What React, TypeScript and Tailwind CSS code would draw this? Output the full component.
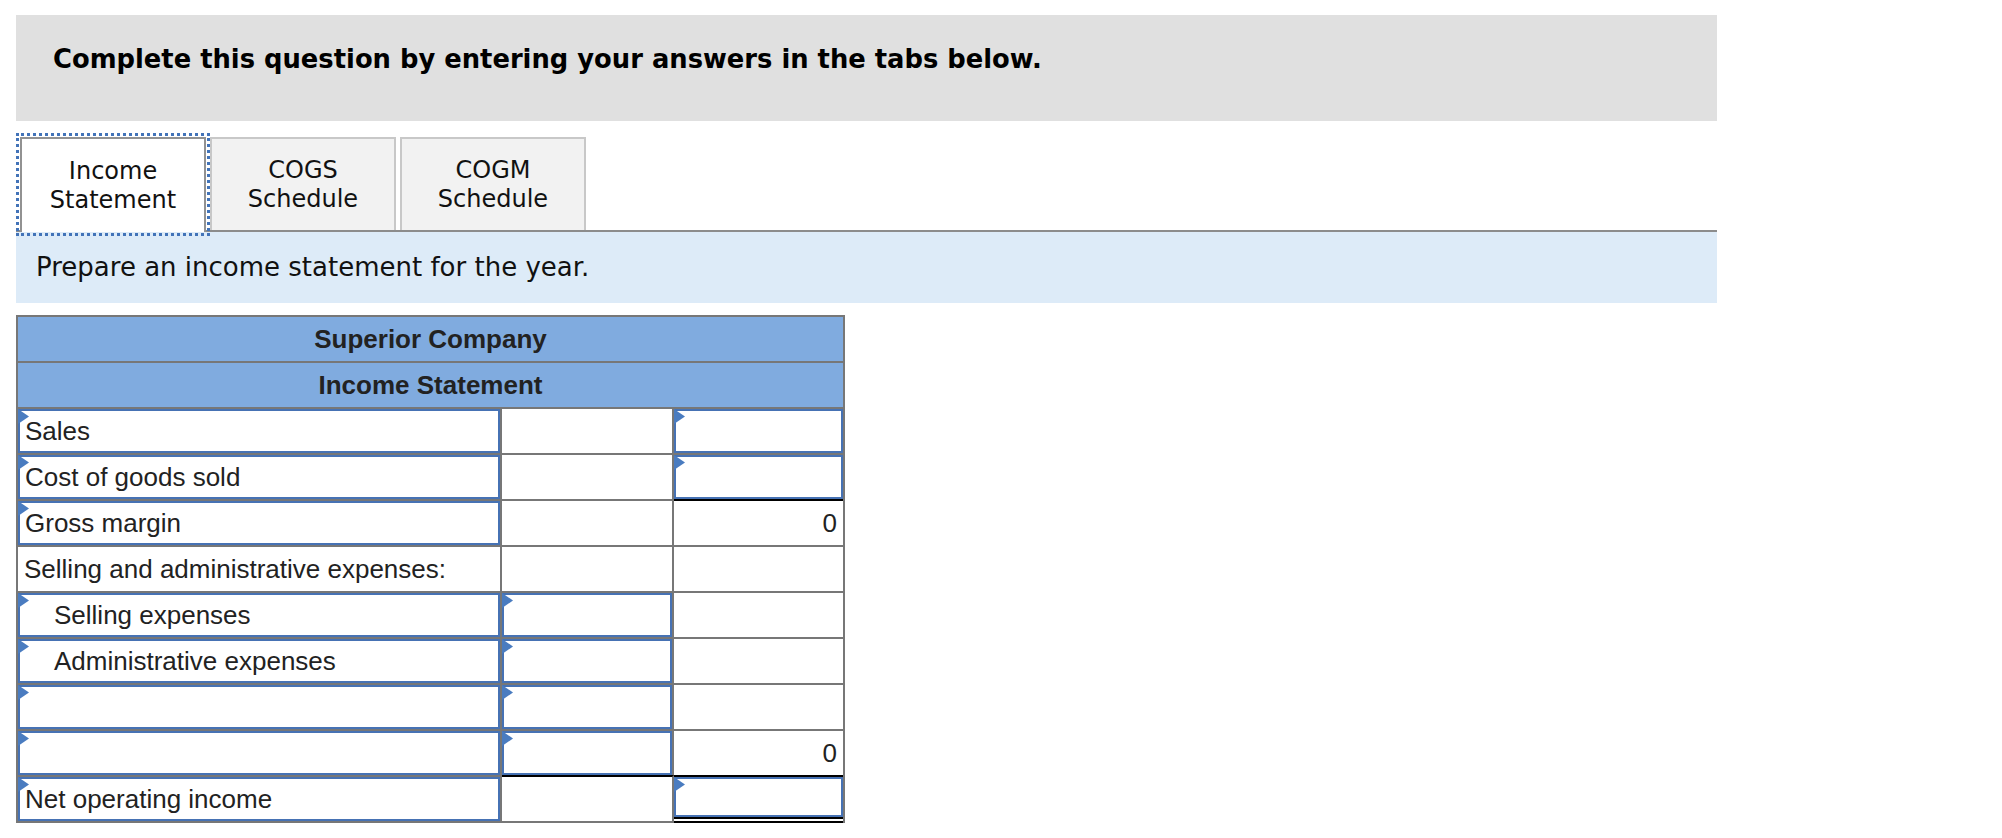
import React from 'react';

const GRAY = 'border-[#777]';

const Flag: React.FC = () => (
  <svg className="absolute -left-[2px] -top-[2px]" width="11" height="15" viewBox="0 0 11 15">
    <polygon points="0,0 11,7.5 0,15" fill="#4a7cc0" />
  </svg>
);

type CellProps = {
  col: 0 | 1 | 2;
  input?: boolean;
  text?: string;
  indent?: boolean;
  right?: boolean;
  topBlack?: boolean;
  last?: boolean;
  double?: boolean;
};

const colClass = ['w-[484px] border-r-2 border-r-[#777]', 'w-[172px] border-r-2 border-r-[#777]', 'flex-1'];

const Cell: React.FC<CellProps> = ({ col, input, text, indent, right, topBlack, last, double }) => {
  const top = topBlack ? 'border-t-2 border-t-black' : 'border-t-2 border-t-[#777]';
  let bottom = '';
  if (last) bottom = double ? 'border-b-[6px] border-double border-b-black' : 'border-b-2 border-b-[#777]';
  const height = last ? 'h-[48px]' : 'h-[46px]';
  const pad = indent ? 'pl-[34px]' : right ? 'justify-end pr-[5px]' : 'pl-[5px]';

  return (
    <div className={`${colClass[col]} ${top} ${bottom} ${height} bg-white`}>
      {input ? (
        <div className={`relative flex h-full items-center border-2 border-[#4672b4] ${pad}`}>
          <Flag />
          {text && <span>{text}</span>}
        </div>
      ) : (
        <div className={`flex h-full items-center ${indent ? 'pl-[36px]' : right ? 'justify-end pr-[6px]' : 'pl-[6px]'}`}>
          {text && <span>{text}</span>}
        </div>
      )}
    </div>
  );
};

const Row: React.FC<{ children: React.ReactNode }> = ({ children }) => <div className="flex">{children}</div>;

const App: React.FC = () => {
  return (
    <div className="min-h-screen bg-white pl-[16px] pt-[15px] font-['DejaVu_Sans',sans-serif] text-[#111]">
      <div className="w-[1701px]">
        {/* Question header */}
        <div className="h-[106px] bg-[#e0e0e0] pl-[37px] pt-[29px]">
          <p className="text-[25.8px] font-bold leading-[31px] text-black">
            Complete this question by entering your answers in the tabs below.
          </p>
        </div>

        {/* Tabs */}
        <div className="mt-[16px] flex items-end gap-[4px] border-b-2 border-[#8c8c8c] pl-[4px]">
          <div className="relative z-10 -mb-[2px] flex h-[95px] w-[186px] flex-col items-center justify-center border-x-2 border-t-2 border-[#929292] bg-white text-[24px] leading-[29px] outline-[3px] outline-offset-[1px] outline-dotted outline-[#4273b8]">
            <span>Income</span>
            <span>Statement</span>
          </div>
          <div className="flex h-[93px] w-[186px] flex-col items-center justify-center border-x-2 border-t-2 border-[#c8c8c8] bg-[#f2f2f2] text-[24px] leading-[29px]">
            <span>COGS</span>
            <span>Schedule</span>
          </div>
          <div className="flex h-[93px] w-[186px] flex-col items-center justify-center border-x-2 border-t-2 border-[#c8c8c8] bg-[#f2f2f2] text-[24px] leading-[29px]">
            <span>COGM</span>
            <span>Schedule</span>
          </div>
        </div>

        {/* Instruction */}
        <div className="flex h-[71px] items-center bg-[#ddebf8] pl-[20px] text-[26px]">
          Prepare an income statement for the year.
        </div>
      </div>

      {/* Statement table */}
      <div className={`mt-[12px] w-[829px] border-x-2 border-t-2 ${GRAY} font-['Liberation_Sans',Arial,sans-serif] text-[26px] text-[#222]`}>
        <div className="flex h-[44px] items-center justify-center bg-[#80abdf] font-bold">Superior Company</div>
        <div className="flex h-[46px] items-center justify-center border-t-2 border-[#777] bg-[#80abdf] font-bold">
          Income Statement
        </div>

        <Row>
          <Cell col={0} input text="Sales" />
          <Cell col={1} />
          <Cell col={2} input />
        </Row>
        <Row>
          <Cell col={0} input text="Cost of goods sold" />
          <Cell col={1} />
          <Cell col={2} input />
        </Row>
        <Row>
          <Cell col={0} input text="Gross margin" />
          <Cell col={1} />
          <Cell col={2} right text="0" topBlack />
        </Row>
        <Row>
          <Cell col={0} text="Selling and administrative expenses:" />
          <Cell col={1} />
          <Cell col={2} />
        </Row>
        <Row>
          <Cell col={0} input indent text="Selling expenses" />
          <Cell col={1} input />
          <Cell col={2} />
        </Row>
        <Row>
          <Cell col={0} input indent text="Administrative expenses" />
          <Cell col={1} input />
          <Cell col={2} />
        </Row>
        <Row>
          <Cell col={0} input />
          <Cell col={1} input />
          <Cell col={2} />
        </Row>
        <Row>
          <Cell col={0} input />
          <Cell col={1} input />
          <Cell col={2} right text="0" />
        </Row>
        <Row>
          <Cell col={0} input text="Net operating income" last />
          <Cell col={1} topBlack last />
          <Cell col={2} input topBlack last double />
        </Row>
      </div>
    </div>
  );
};

export default App;
